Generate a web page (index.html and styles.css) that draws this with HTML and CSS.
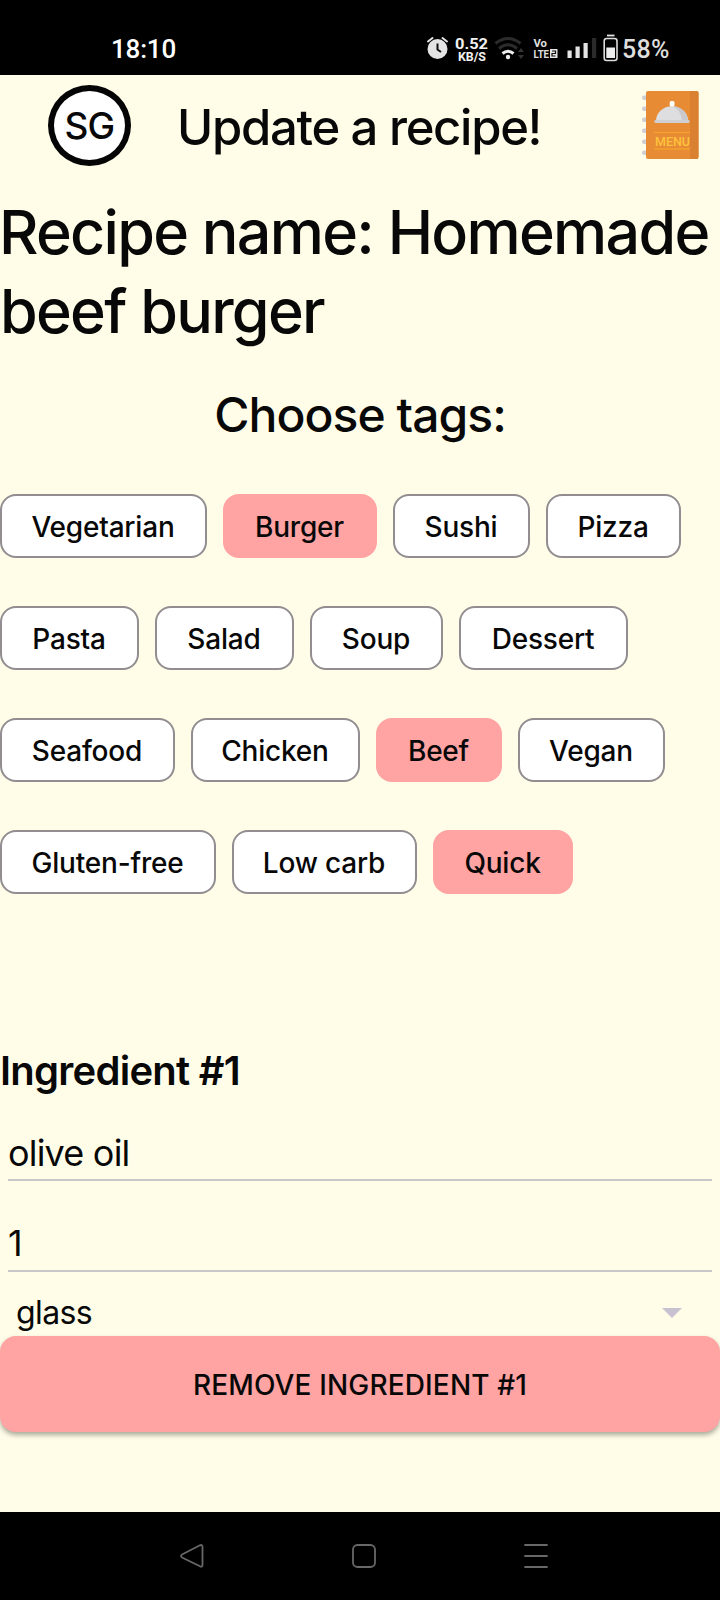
FILE: index.html
```html
<!DOCTYPE html>
<html lang="en">
<head>
<meta charset="utf-8">
<title>Update a recipe</title>
<link rel="stylesheet" href="styles.css">
</head>
<body>
<div class="screen">
  <div class="status">
    <span class="clock">18:10</span>
    <svg class="status-icons" width="195" height="40" viewBox="0 0 195 40">
      <g stroke="#e4e4e4" stroke-width="2" stroke-linecap="round" fill="none"><path d="M2 13.500L6.500 10M16.500 10l4.500 3.500"/></g>
      <circle cx="11.500" cy="21" r="10" fill="#e4e4e4"/>
      <path d="M11.500 15.500v6l3.500 2.500" stroke="#111" stroke-width="2" fill="none"/>
      <text class="net" x="29" y="20.500" textLength="33" lengthAdjust="spacingAndGlyphs">0.52</text>
      <text class="net small" x="32" y="32.500" textLength="28" lengthAdjust="spacingAndGlyphs">KB/S</text>
      <g fill="none" stroke-width="3"><path d="M69.500 15.500q12.500-10 25 0M73 20.500q9-7.500 18 0" stroke="#2b2b2b"/><path d="M76.500 25.500q5.500-4.500 11 0" stroke="#eee"/></g>
      <circle cx="82" cy="29" r="2.200" fill="#eee"/>
      <path d="M92 24l3-4 3 4zM92 27l3 4 3-4z" fill="#333"/>
      <text class="volte" x="107.500" y="18.500" textLength="13.500" lengthAdjust="spacingAndGlyphs">Vo</text>
      <text class="volte" x="107.500" y="30" textLength="15.500" lengthAdjust="spacingAndGlyphs">LTE</text>
      <rect x="124" y="21" width="7.500" height="9" fill="#e4e4e4"/><path d="M126 23h3.500v2.500h-3.500v2.500h3.500" stroke="#111" stroke-width="1.200" fill="none"/>
      <g fill="#e4e4e4"><path d="M141.500 22.500h4.200V30h-4.200zM149.500 18.500h4.200V30h-4.200zM157.500 15h4.200v15h-4.200z"/></g>
      <path d="M166 10h4.200v20h-4.200z" fill="#2b2b2b"/>
      <path d="M181 7.500h7.500" stroke="#e4e4e4" stroke-width="1.800"/>
      <rect x="178.200" y="10.500" width="12.800" height="22" rx="2.500" fill="none" stroke="#ddd" stroke-width="1.600"/>
      <path d="M180.300 19.500h8.700v10.500h-8.700z" fill="#eee"/>
    </svg>
    <span class="battery">58%</span>
  </div>
  <header class="bar">
    <div class="avatar"><span>SG</span></div>
    <h1 class="title">Update a recipe!</h1>
    <svg class="menu" width="58" height="70" viewBox="0 0 58 70">
      <g fill="#cfcfd3"><rect x="0" y="5.500" width="8" height="4.500" rx="2"/><rect x="0" y="16.500" width="8" height="4.500" rx="2"/><rect x="0" y="27.500" width="8" height="4.500" rx="2"/><rect x="0" y="38.500" width="8" height="4.500" rx="2"/><rect x="0" y="49.500" width="8" height="4.500" rx="2"/><rect x="0" y="60.500" width="8" height="4.500" rx="2"/></g>
      <rect x="4" y="1" width="52.500" height="68" rx="2" fill="#e78b35"/>
      <path d="M48 1h6.500q2 0 2 2v64q0 2-2 2H48z" fill="#da8031"/>
      <path d="M14 31a16 14.800 0 0 1 32 0z" fill="#dedee0"/>
      <path d="M30 16.200a16 14.800 0 0 1 16 14.800h-6q-1-12-10-14.800z" fill="#cacace"/>
      <rect x="12.500" y="30" width="35" height="3" rx="1" fill="#cfcfd3"/>
      <rect x="27.700" y="11" width="4.800" height="5.500" rx="1.500" fill="#fff"/>
      <path d="M12 42.500h36M12 59h36" stroke="#f2a12f" stroke-width="1.600"/>
      <text class="menu-word" x="13" y="55.500" textLength="35">MENU</text>
    </svg>
  </header>
  <main>
    <h2 class="name">Recipe name: Homemade<br>beef burger</h2>
    <h3 class="choose">Choose tags:</h3>
    <div class="tags">
      <div class="row"><span class="tag w207">Vegetarian</span><span class="tag on w154">Burger</span><span class="tag w137">Sushi</span><span class="tag w135">Pizza</span></div>
      <div class="row"><span class="tag w139">Pasta</span><span class="tag w139">Salad</span><span class="tag w133">Soup</span><span class="tag w169">Dessert</span></div>
      <div class="row"><span class="tag w175">Seafood</span><span class="tag w169">Chicken</span><span class="tag on w126">Beef</span><span class="tag w147">Vegan</span></div>
      <div class="row"><span class="tag w216">Gluten-free</span><span class="tag w185">Low carb</span><span class="tag on w140">Quick</span></div>
    </div>
    <h4 class="ing">Ingredient #1</h4>
    <div class="field f1">olive oil</div>
    <div class="field f2">1</div>
    <div class="select"><span>glass</span><i class="caret"></i></div>
    <button class="remove">REMOVE INGREDIENT #1</button>
  </main>
  <nav class="nav">
    <svg width="720" height="88" viewBox="0 0 720 88" fill="none" stroke="#686868" stroke-width="1.800" stroke-linejoin="round" stroke-linecap="round">
      <path d="M182.500 42.200L200 33.300q2.500-1 2.500 1.500v18q0 2.500-2.500 1.500L182.500 45.700q-3-1.700 0-3.500z"/>
      <rect x="353" y="33" width="22" height="22" rx="4.500"/>
      <path d="M525 33h22M525 44h22M525 55h22"/>
    </svg>
  </nav>
</div>
</body>
</html>
```
FILE: styles.css
```css
* { box-sizing: border-box; }
body { margin: 0; background: #fffde8; font-family: Inter, "Liberation Sans", sans-serif; color: #080808; }
h1, h2, h3, h4 { margin: 0; font-weight: 500; }
.screen { width: 720px; height: 1600px; display: flex; flex-direction: column; overflow: hidden; }
.status { height: 75px; flex: none; background: #000; color: #eee; display: flex; align-items: flex-start; padding: 28px 0 0 111px; font-family: Roboto, sans-serif; }
.clock { width: 315px; margin-top: 6px; font-size: 26px; line-height: 30px; font-weight: 500; letter-spacing: -0.2px; color: #fff; }
.status-icons { flex: none; }
.net { font: 700 15.5px Roboto, sans-serif; fill: #f2f2f2; }
.small { font-size: 12.5px; }
.volte { font: 700 11.5px Roboto, sans-serif; fill: #e0e0e0; }
.battery { margin: 7px 0 0 1px; font-size: 25px; line-height: 30px; font-weight: 500; letter-spacing: 0.3px; color: #dedede; }
.bar { height: 115px; flex: none; display: flex; align-items: flex-start; padding: 9px 20px 0 48px; }
.avatar { width: 83px; height: 81px; margin-top: 1px; border: 6px solid #050505; border-radius: 50%; background: #fff; display: flex; align-items: center; justify-content: center; font-size: 37px; font-weight: 500; letter-spacing: -0.7px; }
.title { width: 513px; margin-top: 14px; padding-left: 46px; font-size: 49px; line-height: 60px; letter-spacing: -1.3px; white-space: nowrap; }
.menu { flex: none; margin-top: 6px; margin-left: -2px; }
.menu-word { font: 500 12.5px Roboto, sans-serif; fill: #ffc23c; }
main { height: 1322px; flex: none; display: flex; flex-direction: column; }
.name { height: 180px; padding-top: 3px; font-size: 61px; line-height: 79px; letter-spacing: -1.72px; text-indent: -1px; white-space: nowrap; }
.choose { height: 124px; padding-top: 15px; text-align: center; font-size: 48px; line-height: 60px; letter-spacing: -0.95px; }
.tags { display: flex; flex-direction: column; gap: 48px; }
.row { display: flex; gap: 16px; }
.tag { flex: none; height: 64px; border: 2px solid #928d90; border-radius: 16px; background: #fff; display: flex; align-items: center; justify-content: center; padding: 2px 1px 0 0; font-size: 28px; font-weight: 500; letter-spacing: -0.2px; white-space: nowrap; }
.on { background: #ffa3a3; border-color: #ffa3a3; }
.w207 { width: 207px; } .w154 { width: 154px; } .w137 { width: 137px; } .w135 { width: 135px; }
.w139 { width: 139px; } .w133 { width: 133px; } .w169 { width: 169px; } .w175 { width: 175px; }
.w126 { width: 126px; } .w147 { width: 147px; } .w216 { width: 216px; } .w185 { width: 185px; } .w140 { width: 140px; }
.ing { margin-top: 147px; height: 79px; font-size: 40px; line-height: 60px; font-weight: 600; letter-spacing: -0.75px; }
.field { margin: 0 8px; border-bottom: 2px solid #c9c6c9; font-size: 36px; line-height: 50px; letter-spacing: -0.8px; }
.f1 { height: 61px; padding-top: 8px; }
.f2 { height: 91px; padding-top: 37px; }
.select { height: 64px; padding: 16px 38px 0 16px; display: flex; justify-content: space-between; font-size: 32px; line-height: 50px; letter-spacing: -0.6px; }
.caret { margin-top: 20px; width: 20px; height: 10px; background: #c8c1cf; clip-path: polygon(0 0, 100% 0, 50% 100%); }
.remove { flex: none; height: 96px; border: 0; padding: 2px 0 0; border-radius: 16px; background: #ffa3a3; box-shadow: 0 3px 5px #0005; font: 500 28px Inter, sans-serif; letter-spacing: 0.15px; color: #080808; }
.nav { height: 88px; flex: none; background: #000; }
```
